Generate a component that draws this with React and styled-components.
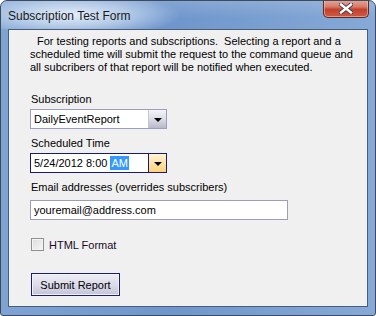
import styled, { createGlobalStyle } from "styled-components";

const Global = createGlobalStyle`
  html, body { margin: 0; padding: 0; background: #ffffff; }
  body { font-family: "Liberation Sans", Arial, sans-serif; }
`;

const Window = styled.div`
  width: 376px;
  height: 316px;
  box-sizing: border-box;
  border: 1px solid #3d4b5c;
  border-radius: 7px 7px 3px 3px;
  background: linear-gradient(90deg, #7fa3d3 0%, #6f96cc 45%, #86a9d6 100%);
  display: flex;
  flex-direction: column;
  overflow: hidden;
`;

const TitleBar = styled.div`
  height: 28px;
  display: flex;
  align-items: flex-start;
  justify-content: space-between;
  background:
    radial-gradient(ellipse 110px 22px at 70px 14px, rgba(235, 243, 252, 0.95) 0%, rgba(200, 218, 240, 0.7) 55%, rgba(160, 190, 228, 0) 100%),
    linear-gradient(180deg, rgba(255, 255, 255, 0.15) 0%, rgba(255, 255, 255, 0) 60%);
`;

const Title = styled.div`
  font-family: "Liberation Sans", Arial, sans-serif;
  font-size: 12px;
  color: #1a1a1a;
  padding: 8px 0 0 7px;
`;

const CloseButton = styled.div`
  width: 46px;
  height: 18px;
  margin-right: 6px;
  margin-top: -1px;
  box-sizing: border-box;
  border: 1px solid #5a2a24;
  border-top: none;
  border-radius: 0 0 5px 5px;
  background: linear-gradient(180deg, #e8a99b 0%, #d77a68 40%, #c2412b 55%, #cf5a44 100%);
  display: flex;
  align-items: center;
  justify-content: center;
  box-shadow: inset 0 0 0 1px rgba(255, 210, 200, 0.5);
`;

const Client = styled.div`
  flex: 1;
  margin: 0 7px 8px 7px;
  border: 1px solid #4b5c75;
  background: #f0f0f0;
  padding: 5px 0 0 21px;
  display: flex;
  flex-direction: column;
  font-family: "Liberation Sans", Arial, sans-serif;
  font-size: 11px;
  color: #000;
`;

const Description = styled.p`
  margin: 0;
  line-height: 13px;
  width: 334px;
  & span { padding-left: 7px; }
`;

const Label = styled.div`
  line-height: 13px;
  margin-top: ${(p) => p.$top}px;
  padding-left: 1px;
`;

const Field = styled.div`
  margin-top: ${(p) => p.$top}px;
  width: ${(p) => p.$width}px;
  height: 20px;
  box-sizing: border-box;
  border: 1px solid ${(p) => (p.$focused ? "#1a1a6e" : "#9d9dbf")};
  background: #fff;
  display: flex;
  align-items: stretch;
`;

const FieldText = styled.div`
  flex: 1;
  padding-left: 3px;
  display: flex;
  align-items: center;
  font-size: 11px;
  & mark {
    background: #3399ff;
    color: #fff;
    margin-left: 3px;
    padding: 1px 1px;
  }
`;

const DropButton = styled.div`
  width: 17px;
  display: flex;
  align-items: center;
  justify-content: center;
  border-left: 1px solid ${(p) => (p.$hot ? "#1a1a6e" : "#c4c4d8")};
  background: ${(p) =>
    p.$hot
      ? "linear-gradient(180deg, #fff3d6 0%, #ffe3a8 50%, #ffd27a 100%)"
      : "linear-gradient(180deg, #f4f4f8 0%, #dcdce6 50%, #b8b8cc 100%)"};
`;

const Arrow = styled.div`
  width: 0;
  height: 0;
  border-left: 4px solid transparent;
  border-right: 4px solid transparent;
  border-top: 4px solid #000;
  margin-top: 2px;
`;

const CheckRow = styled.label`
  margin-top: 18px;
  display: flex;
  align-items: center;
  gap: 5px;
  font-size: 11px;
  color: #1a0a2a;
`;

const Box = styled.span`
  width: 13px;
  height: 13px;
  box-sizing: border-box;
  border: 1px solid #8e8f8f;
  background: linear-gradient(135deg, #dcdcdc 0%, #f6f6f6 100%);
  box-shadow: inset 0 0 0 1px #f4f4f4;
  margin-left: 1px;
`;

const SubmitButton = styled.button`
  margin-top: 22px;
  margin-left: 1px;
  width: 89px;
  height: 23px;
  box-sizing: border-box;
  border: 1px solid #1c1c7a;
  border-radius: 0;
  background: linear-gradient(180deg, #eeeef6 0%, #dcdcea 50%, #c4c4d8 100%);
  font-family: "Liberation Sans", Arial, sans-serif;
  font-size: 11px;
  color: #000;
  padding: 0;
  box-shadow: inset 0 0 0 1px #f2f2fa;
`;

export default function App() {
  return (
    <>
      <Global />
      <Window>
        <TitleBar>
          <Title>Subscription Test Form</Title>
          <CloseButton>
            <svg width="14" height="11" viewBox="0 0 14 11">
              <path
                d="M2 1.5 L12 9.5 M12 1.5 L2 9.5"
                stroke="#3a3a4a"
                strokeWidth="4.2"
                strokeLinecap="square"
              />
              <path
                d="M2 1.5 L12 9.5 M12 1.5 L2 9.5"
                stroke="#ffffff"
                strokeWidth="2.4"
                strokeLinecap="square"
              />
            </svg>
          </CloseButton>
        </TitleBar>
        <Client>
          <Description>
            <span>For testing reports and subscriptions.&nbsp; Selecting a report and a</span>
            <br />
            scheduled time will submit the request to the command queue and
            <br />
            all subcribers of that report will be notified when executed.
          </Description>
          <Label $top={19}>Subscription</Label>
          <Field $top={3} $width={137}>
            <FieldText>DailyEventReport</FieldText>
            <DropButton>
              <Arrow />
            </DropButton>
          </Field>
          <Label $top={8}>Scheduled Time</Label>
          <Field $top={3} $width={137} $focused>
            <FieldText>
              5/24/2012 8:00<mark>AM</mark>
            </FieldText>
            <DropButton $hot>
              <Arrow />
            </DropButton>
          </Field>
          <Label $top={8}>Email addresses (overrides subscribers)</Label>
          <Field $top={6} $width={258}>
            <FieldText>youremail@address.com</FieldText>
          </Field>
          <CheckRow>
            <Box />
            HTML Format
          </CheckRow>
          <SubmitButton>Submit Report</SubmitButton>
        </Client>
      </Window>
    </>
  );
}
